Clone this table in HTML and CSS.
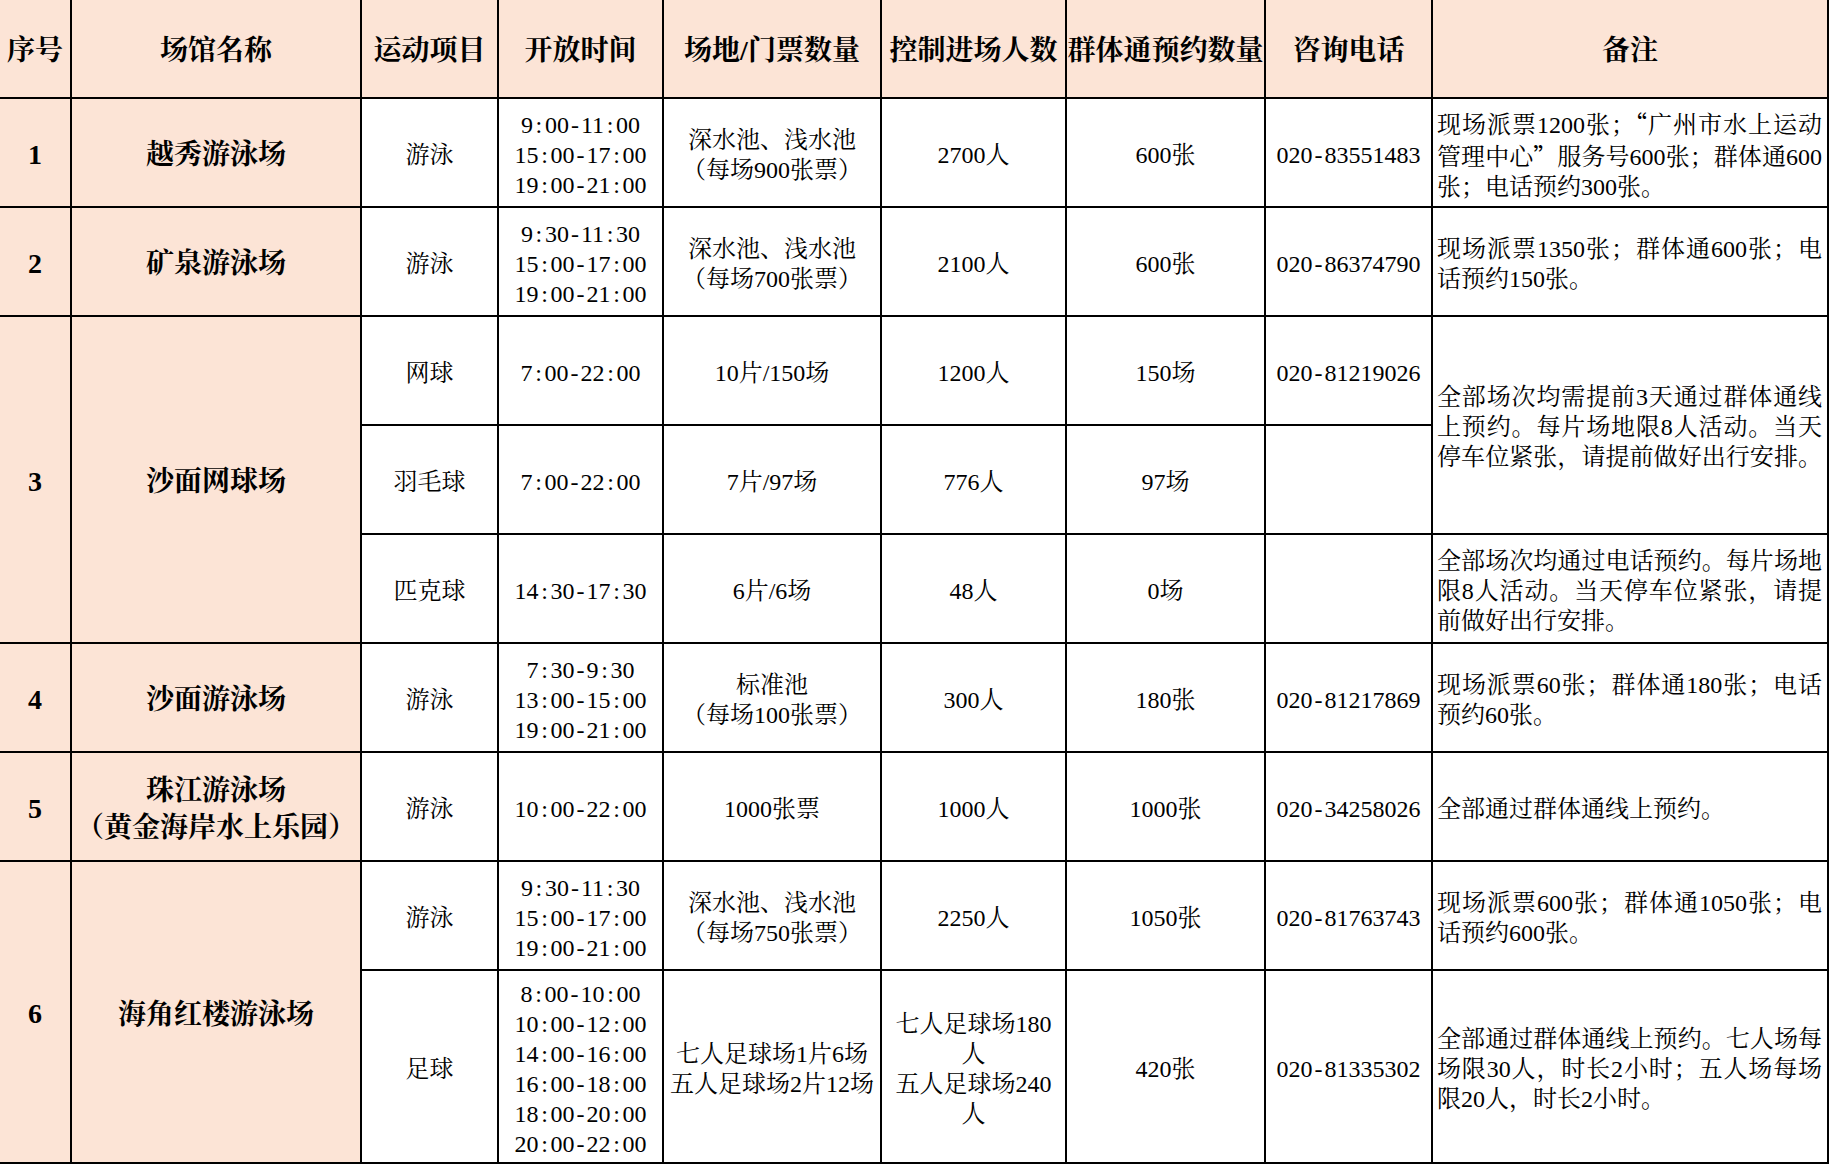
FILE: index.html
```html
<!DOCTYPE html>
<html lang="zh-CN">
<head>
<meta charset="utf-8">
<title>场馆开放安排</title>
<link rel="stylesheet" href="styles.css">
</head>
<body>
<table class="grid">
  <colgroup>
    <col class="c-no">
    <col class="c-name">
    <col class="c-sport">
    <col class="c-time">
    <col class="c-qty">
    <col class="c-limit">
    <col class="c-book">
    <col class="c-tel">
    <col class="c-note">
  </colgroup>
  <thead>
    <tr class="hd">
      <th>序号</th>
      <th>场馆名称</th>
      <th>运动项目</th>
      <th>开放时间</th>
      <th>场地/门票数量</th>
      <th>控制进场人数</th>
      <th>群体通预约数量</th>
      <th>咨询电话</th>
      <th>备注</th>
    </tr>
  </thead>
  <tbody>
    <tr class="r">
      <td class="no">1</td>
      <td class="name">越秀游泳场</td>
      <td>游泳</td>
      <td class="mono">9<i>:</i>00<i>-</i>11<i>:</i>00<br>15<i>:</i>00<i>-</i>17<i>:</i>00<br>19<i>:</i>00<i>-</i>21<i>:</i>00</td>
      <td>深水池、浅水池<br>（每场900张票）</td>
      <td>2700人</td>
      <td>600张</td>
      <td class="mono">020<i>-</i>83551483</td>
      <td class="note"><span class="ln">现场派票1200张；<b class="q">“</b>广州市水上运动</span><span class="ln">管理中心<b class="q">”</b>服务号600张；群体通600</span><span class="ln end">张；电话预约300张。</span></td>
    </tr>
    <tr class="r">
      <td class="no">2</td>
      <td class="name">矿泉游泳场</td>
      <td>游泳</td>
      <td class="mono">9<i>:</i>30<i>-</i>11<i>:</i>30<br>15<i>:</i>00<i>-</i>17<i>:</i>00<br>19<i>:</i>00<i>-</i>21<i>:</i>00</td>
      <td>深水池、浅水池<br>（每场700张票）</td>
      <td>2100人</td>
      <td>600张</td>
      <td class="mono">020<i>-</i>86374790</td>
      <td class="note"><span class="ln">现场派票1350张；群体通600张；电</span><span class="ln end">话预约150张。</span></td>
    </tr>
    <tr class="r">
      <td class="no" rowspan="3">3</td>
      <td class="name" rowspan="3">沙面网球场</td>
      <td>网球</td>
      <td class="mono">7<i>:</i>00<i>-</i>22<i>:</i>00</td>
      <td>10片/150场</td>
      <td>1200人</td>
      <td>150场</td>
      <td class="mono">020<i>-</i>81219026</td>
      <td class="note" rowspan="2"><span class="ln">全部场次均需提前3天通过群体通线</span><span class="ln">上预约。每片场地限8人活动。当天</span><span class="ln">停车位紧张，请提前做好出行安排。</span></td>
    </tr>
    <tr class="r">
      <td>羽毛球</td>
      <td class="mono">7<i>:</i>00<i>-</i>22<i>:</i>00</td>
      <td>7片/97场</td>
      <td>776人</td>
      <td>97场</td>
      <td></td>
    </tr>
    <tr class="r">
      <td>匹克球</td>
      <td class="mono">14<i>:</i>30<i>-</i>17<i>:</i>30</td>
      <td>6片/6场</td>
      <td>48人</td>
      <td>0场</td>
      <td></td>
      <td class="note"><span class="ln">全部场次均通过电话预约。每片场地</span><span class="ln">限8人活动。当天停车位紧张，请提</span><span class="ln end">前做好出行安排。</span></td>
    </tr>
    <tr class="r">
      <td class="no">4</td>
      <td class="name">沙面游泳场</td>
      <td>游泳</td>
      <td class="mono">7<i>:</i>30<i>-</i>9<i>:</i>30<br>13<i>:</i>00<i>-</i>15<i>:</i>00<br>19<i>:</i>00<i>-</i>21<i>:</i>00</td>
      <td>标准池<br>（每场100张票）</td>
      <td>300人</td>
      <td>180张</td>
      <td class="mono">020<i>-</i>81217869</td>
      <td class="note"><span class="ln">现场派票60张；群体通180张；电话</span><span class="ln end">预约60张。</span></td>
    </tr>
    <tr class="r">
      <td class="no">5</td>
      <td class="name">珠江游泳场<br>（黄金海岸水上乐园）</td>
      <td>游泳</td>
      <td class="mono">10<i>:</i>00<i>-</i>22<i>:</i>00</td>
      <td>1000张票</td>
      <td>1000人</td>
      <td>1000张</td>
      <td class="mono">020<i>-</i>34258026</td>
      <td class="note"><span class="ln end">全部通过群体通线上预约。</span></td>
    </tr>
    <tr class="r">
      <td class="no" rowspan="2">6</td>
      <td class="name" rowspan="2">海角红楼游泳场</td>
      <td>游泳</td>
      <td class="mono">9<i>:</i>30<i>-</i>11<i>:</i>30<br>15<i>:</i>00<i>-</i>17<i>:</i>00<br>19<i>:</i>00<i>-</i>21<i>:</i>00</td>
      <td>深水池、浅水池<br>（每场750张票）</td>
      <td>2250人</td>
      <td>1050张</td>
      <td class="mono">020<i>-</i>81763743</td>
      <td class="note"><span class="ln">现场派票600张；群体通1050张；电</span><span class="ln end">话预约600张。</span></td>
    </tr>
    <tr class="tall">
      <td>足球</td>
      <td class="mono">8<i>:</i>00<i>-</i>10<i>:</i>00<br>10<i>:</i>00<i>-</i>12<i>:</i>00<br>14<i>:</i>00<i>-</i>16<i>:</i>00<br>16<i>:</i>00<i>-</i>18<i>:</i>00<br>18<i>:</i>00<i>-</i>20<i>:</i>00<br>20<i>:</i>00<i>-</i>22<i>:</i>00</td>
      <td>七人足球场1片6场<br>五人足球场2片12场</td>
      <td>七人足球场180<br>人<br>五人足球场240<br>人</td>
      <td>420张</td>
      <td class="mono">020<i>-</i>81335302</td>
      <td class="note"><span class="ln">全部通过群体通线上预约。七人场每</span><span class="ln">场限30人，时长2小时；五人场每场</span><span class="ln end">限20人，时长2小时。</span></td>
    </tr>
  </tbody>
</table>
</body>
</html>
```

FILE: styles.css
```css
html, body {
  margin: 0;
  padding: 0;
  background: #ffffff;
}

.grid {
  width: 1829px;
  table-layout: fixed;
  border-collapse: separate;
  border-spacing: 0;
  font-family: "Liberation Serif", "Noto Serif CJK SC", "Noto Sans CJK SC", serif;
  color: #000000;
}

.c-no { width: 72px; }
.c-name { width: 290px; }
.c-sport { width: 137px; }
.c-time { width: 165px; }
.c-qty { width: 218px; }
.c-limit { width: 185px; }
.c-book { width: 199px; }
.c-tel { width: 167px; }
.c-note { width: 396px; }

.grid th,
.grid td {
  border-right: 2px solid #000000;
  border-bottom: 2px solid #000000;
  padding: 4px 0 0 0;
  text-align: center;
  vertical-align: middle;
  overflow: hidden;
  white-space: nowrap;
}

.grid th {
  background: #fce4d6;
  font-size: 28px;
  font-weight: bold;
  line-height: 36px;
}

.grid td {
  font-size: 24px;
  font-weight: normal;
  line-height: 30px;
}

.hd { height: 99px; }
.r { height: 109px; }
.tall { height: 193px; }

.grid td.no {
  background: #fce4d6;
  font-size: 28px;
  font-weight: bold;
}

.grid td.name {
  background: #fce4d6;
  font-size: 28px;
  font-weight: bold;
  line-height: 37px;
}

/* half-width fixed punctuation, as in the original sheet's font */
.mono i {
  display: inline-block;
  width: 0.5em;
  font-style: normal;
  text-align: center;
}

.grid td.note {
  text-align: left;
  padding-left: 4px;
  padding-right: 5px;
  white-space: normal;
}

.note .ln {
  display: block;
  white-space: nowrap;
  text-align: justify;
  text-align-last: justify;
}

.note .ln.end {
  text-align-last: left;
}

.note .q {
  font-weight: normal;
  font-family: "Noto Sans CJK SC", sans-serif;
  font-feature-settings: "fwid" 1;
}
```
